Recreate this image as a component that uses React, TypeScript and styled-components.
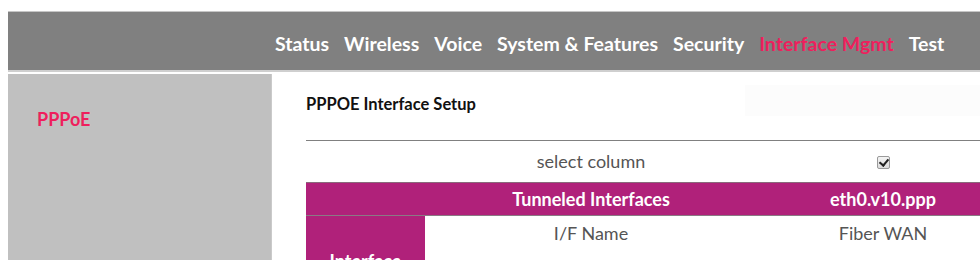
import React from 'react';
import styled, { createGlobalStyle } from 'styled-components';

const GlobalStyle = createGlobalStyle`
  html, body {
    margin: 0;
    padding: 0;
    background: #fff;
    overflow: hidden;
  }
  body {
    font-family: Lato, "Open Sans", "Liberation Sans", sans-serif;
  }
`;

const navItems = [
  'Status',
  'Wireless',
  'Voice',
  'System & Features',
  'Security',
  'Interface Mgmt',
  'Test',
];

const rows = [
  { label: 'I/F Name', value: 'Fiber WAN' },
  { label: 'I/F Type', value: 'Unlink' },
];

export default () => {
  return (
    <PageContainer>
      <GlobalStyle />
      <Header>
        <Nav>
          {navItems.map((item) => (
            <NavItem key={item} active={item === 'Interface Mgmt'}>
              {item}
            </NavItem>
          ))}
        </Nav>
      </Header>
      <Main>
        <Sidebar>
          <SideLink>PPPoE</SideLink>
        </Sidebar>
        <Content>
          <TitleRow>
            <Title>PPPOE Interface Setup</Title>
            <TitleAside />
          </TitleRow>
          <Table>
            <colgroup>
              <col style={{ width: 119 }} />
              <col style={{ width: 332 }} />
              <col style={{ width: 252 }} />
            </colgroup>
            <tbody>
              <SelectRow>
                <td></td>
                <td>select column</td>
                <td>
                  <Check type="checkbox" defaultChecked />
                </td>
              </SelectRow>
              <HeadRow>
                <td></td>
                <td>Tunneled Interfaces</td>
                <td>eth0.v10.ppp</td>
              </HeadRow>
              {rows.map((row, i) => (
                <DataRow key={row.label}>
                  {i === 0 && <GroupCell rowSpan={rows.length}>Interface</GroupCell>}
                  <td>{row.label}</td>
                  <td>{row.value}</td>
                </DataRow>
              ))}
            </tbody>
          </Table>
        </Content>
      </Main>
    </PageContainer>
  );
};

const PageContainer = styled.div`
  box-sizing: border-box;
  width: 1040px;
  padding: 11px 0 0 8px;
`;

const Header = styled.header`
  box-sizing: border-box;
  height: 61px;
  background-color: #808080;
  border-top: 1px solid #c6c6c6;
  border-bottom: 2px solid #cfcfcf;
  display: flex;
  align-items: center;
`;

const Nav = styled.nav`
  display: flex;
  gap: 15px;
  padding: 4px 0 0 267px;
`;

const NavItem = styled.span<{ active?: boolean }>`
  font-size: 19.5px;
  font-weight: bold;
  color: ${(p) => (p.active ? '#ee1f5d' : '#ffffff')};
  white-space: nowrap;
`;

const Main = styled.div`
  display: flex;
  margin-top: 2px;
  height: 200px;
`;

const Sidebar = styled.aside`
  box-sizing: border-box;
  width: 264px;
  flex: none;
  background-color: #c0c0c0;
  border-right: 1px solid #cacaca;
  padding: 34px 0 0 29px;
`;

const SideLink = styled.div`
  font-size: 18px;
  font-weight: bold;
  color: #ee1f5d;
`;

const Content = styled.section`
  flex: 1;
  padding: 11px 0 0 34px;
`;

const TitleRow = styled.div`
  display: flex;
  align-items: center;
  height: 31px;
  margin-bottom: 24px;
`;

const Title = styled.div`
  width: 439px;
  padding-top: 6px;
  font-size: 16.5px;
  font-weight: bold;
  color: #111;
`;

const TitleAside = styled.div`
  flex: 1;
  height: 31px;
  background-color: #fcfcfc;
`;

const Table = styled.table`
  width: 703px;
  border-collapse: collapse;
  table-layout: fixed;
  border-top: 1px solid #808080;
  font-size: 18px;
  text-align: center;
  td {
    padding: 0;
  }
`;

const SelectRow = styled.tr`
  height: 42px;
  color: #555;
  td {
    vertical-align: middle;
    padding-bottom: 2px;
  }
`;

const HeadRow = styled.tr`
  height: 33px;
  background-color: #b0217a;
  color: #fff;
  font-weight: bold;
  border-top: 1px solid #8a6a7c;
  border-bottom: 1px solid #8a7a84;
`;

const DataRow = styled.tr`
  height: 35px;
  color: #555;
`;

const GroupCell = styled.td`
  background-color: #b0217a;
  color: #fff;
  font-weight: bold;
  vertical-align: middle;
  padding-top: 20px !important;
`;

const Check = styled.input`
  appearance: none;
  position: relative;
  width: 13px;
  height: 13px;
  margin: 0;
  border: 1px solid #9a9a9a;
  border-radius: 2px;
  background: linear-gradient(#f4f4f4, #dcdcdc);
  vertical-align: middle;
  &:checked::after {
    content: '';
    position: absolute;
    left: 3px;
    top: 0px;
    width: 4px;
    height: 7px;
    border: solid #222;
    border-width: 0 2px 2px 0;
    transform: rotate(40deg);
  }
`;
